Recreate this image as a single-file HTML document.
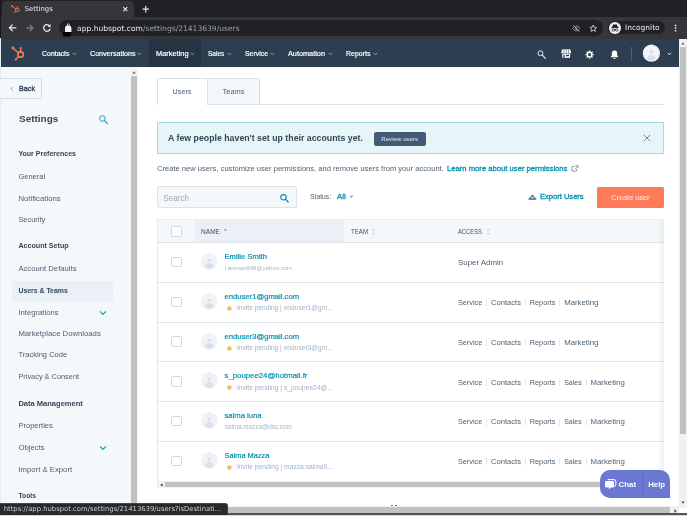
<!DOCTYPE html>
<html lang="en">
<head>
<meta charset="utf-8">
<title>Settings</title>
<style>
*{box-sizing:border-box;margin:0;padding:0}
html,body{width:687px;height:516px;overflow:hidden;background:#fff}
body{position:relative;font-family:"Liberation Sans",sans-serif;font-size:7.5px;color:#33475b}
.abs{position:absolute}
.ui{font-family:"DejaVu Sans","Liberation Sans",sans-serif}
.t{position:absolute;white-space:nowrap;line-height:10px;height:10px}
.row{left:157px;width:507px;height:1px;background:#dfe3eb}
.cb{left:171.4px;width:10.6px;height:10.4px;border:1px solid #d0d9e3;border-radius:1.5px;background:#fff}
.av{left:200.8px;width:16.8px;height:16.8px;border-radius:50%;background:#f0f3f8;overflow:hidden}
.av b{position:absolute;left:6.1px;top:4.2px;width:4.6px;height:4.6px;border-radius:50%;background:#dde3ec}
.av u{position:absolute;left:3.9px;top:9.6px;width:9px;height:9px;border-radius:50% 50% 0 0;background:#dde3ec}
.dot{left:227px;width:4.6px;height:4.6px;border-radius:50%;background:#f5c26b}
</style>
</head>
<body>
<!-- ===== browser chrome ===== -->
<div class="abs" style="left:0;top:0;width:687px;height:17px;background:#202124"></div>
<div class="abs" style="left:1.5px;top:0.5px;width:132.5px;height:17px;background:#35363a;border-radius:4px 4px 0 0"></div>
<div class="abs" style="left:0;top:17px;width:687px;height:21.700px;background:#35363a"></div>
<div class="abs" style="left:59px;top:20px;width:543.5px;height:15.600px;border-radius:8px;background:#202124"></div>
<div class="abs" style="left:607.7px;top:21px;width:57px;height:13.400px;border-radius:7px;background:#202124"></div>
<div class="abs" style="left:0;top:0;width:1px;height:38px;background:#17181a"></div>
<div class="t ui" style="will-change:transform;left:76.75px;top:23.500px;font-size:7.57px;color:#e8eaed">app.hubspot.com<span style="color:#9aa0a6">/settings/21413639/users</span></div>
<!-- favicon -->
<svg class="abs" style="left:10.800px;top:5px" width="9.400" height="8.800" viewBox="0 0 14 15" preserveAspectRatio="none"><g fill="none" stroke="#f2704f" stroke-width="1.500" stroke-linecap="round"><circle cx="9.400" cy="8.600" r="2.700"/><path d="M9.400 5.600V2.400M7.200 6.800L1.800 2.200M7.400 10.600L4.800 13.200"/></g><circle cx="1.700" cy="1.900" r="1.500" fill="#ff7a59"/></svg>
<svg class="abs" style="left:122px;top:6px" width="7" height="7" viewBox="0 0 7 7"><path d="M1.300 1.100l4 4M5.300 1.100l-4 4" stroke="#e8eaed" stroke-width="1.100" fill="none"/></svg>
<svg class="abs" style="left:142px;top:5px" width="8" height="8" viewBox="0 0 8 8"><path d="M3.700 1v6.400M0.500 4.200h6.400" stroke="#e8eaed" stroke-width="1.200" fill="none"/></svg>
<svg class="abs" style="left:8px;top:23px" width="10" height="10" viewBox="0 0 10 10"><path d="M8.300 4.800H1.600M4.600 1.600L1.400 4.800l3.200 3.200" stroke="#e8eaed" stroke-width="1.250" fill="none"/></svg>
<svg class="abs" style="left:25px;top:23px" width="10" height="10" viewBox="0 0 10 10"><path d="M1 4.800h6.700M4.700 1.600l3.200 3.200-3.200 3.200" stroke="#7d8084" stroke-width="1.250" fill="none"/></svg>
<svg class="abs" style="left:42px;top:23px" width="10" height="10" viewBox="0 0 10 10"><path d="M7.600 3A3.300 3.300 0 1 0 8.200 5.600" stroke="#e8eaed" stroke-width="1.250" fill="none"/><path d="M8.600 1v3H5.600z" fill="#e8eaed"/></svg>
<!-- lock + pointer cursor -->
<svg class="abs" style="left:62px;top:22px" width="12" height="16" viewBox="0 0 12 16"><path d="M5.300 3.400V2.900a1.100 1.100 0 0 1 2.200 0v.5" stroke="#e8eaed" stroke-width=".8" fill="none"/><path d="M3 10V6.200c0-1.800 1.200-3 3.100-3 2 0 3.300 1.200 3.300 3.200V10z" fill="#f4f5f6"/><path d="M1 10h8.400v1.800H8.600v2.700H1z" fill="#050505"/></svg>
<!-- eye-off, star -->
<svg class="abs" style="left:571.600px;top:23.600px" width="8.800" height="8.800" viewBox="0 0 10 10"><path d="M.8 5C2 3 3.400 2.300 5 2.300S8 3 9.200 5C8 7 6.600 7.700 5 7.700S2 7 .8 5z" fill="none" stroke="#bdc1c6" stroke-width=".9"/><circle cx="5" cy="5" r="1.300" fill="#bdc1c6"/><path d="M1.600 1.400l6.800 7.200" stroke="#bdc1c6" stroke-width=".9"/><path d="M2.500 .9l6.800 7.200" stroke="#202124" stroke-width=".8"/></svg>
<svg class="abs" style="left:589.200px;top:23.500px" width="8.500" height="8.500" viewBox="0 0 10 10"><path d="M5 1.200l1.150 2.600 2.800.25-2.100 1.850.65 2.750L5 7.200 2.500 8.650l.65-2.750-2.100-1.850 2.800-.25z" fill="none" stroke="#dadce0" stroke-width=".95" stroke-linejoin="round"/></svg>
<!-- incognito avatar -->
<div class="abs" style="left:609px;top:22px;width:11.800px;height:11.800px;border-radius:50%;background:#f1f3f4"></div>
<svg class="abs" style="left:609px;top:22px" width="12" height="12" viewBox="0 0 12 12"><path d="M4.100 2.600h3.800l.9 2.400H3.200z" fill="#202124"/><rect x="2.200" y="5" width="7.600" height=".9" fill="#202124"/><circle cx="4.300" cy="7.900" r="1.250" fill="none" stroke="#202124" stroke-width=".8"/><circle cx="7.700" cy="7.900" r="1.250" fill="none" stroke="#202124" stroke-width=".8"/><path d="M5.400 7.700h1.200" stroke="#202124" stroke-width=".7"/></svg>
<svg class="abs" style="left:673px;top:23px" width="5" height="10" viewBox="0 0 5 10"><circle cx="2.500" cy="2.400" r=".9" fill="#e8eaed"/><circle cx="2.500" cy="5.100" r=".9" fill="#e8eaed"/><circle cx="2.500" cy="7.800" r=".9" fill="#e8eaed"/></svg>

<!-- ===== hubspot nav ===== -->
<div class="abs" style="left:0;top:38.700px;width:679px;height:28.700px;background:#2d3e50"></div>
<div class="abs" style="left:148.600px;top:38.700px;width:52.400px;height:28.700px;background:#253342"></div>
<div class="abs" style="left:0;top:38px;width:1.200px;height:478px;background:#e9ecef"></div>
<svg class="abs" style="left:11px;top:46px" width="15" height="15" viewBox="0 0 15 15"><g fill="none" stroke="#ff7a59" stroke-linecap="round"><circle cx="9.600" cy="8.600" r="2.700" stroke-width="1.600"/><path d="M9.600 5.600V2.200M7.400 6.800L2 2.200M7.600 10.600L5 13.200" stroke-width="1.400"/></g><circle cx="1.900" cy="1.900" r="1.400" fill="#ff7a59"/><circle cx="9.600" cy="2" r="1" fill="#ff7a59"/><circle cx="4.800" cy="13.400" r="1" fill="#ff7a59"/></svg>
<svg class="abs" style="left:72px;top:51.9px" width="5" height="4" viewBox="0 0 5 4"><path d="M.6 .9l1.800 1.800L4.200 .9" stroke="#b4bfcc" stroke-width="0.8" fill="none"/></svg>
<svg class="abs" style="left:136.6px;top:51.9px" width="5" height="4" viewBox="0 0 5 4"><path d="M.6 .9l1.800 1.800L4.200 .9" stroke="#b4bfcc" stroke-width="0.8" fill="none"/></svg>
<svg class="abs" style="left:190.1px;top:51.9px" width="5" height="4" viewBox="0 0 5 4"><path d="M.6 .9l1.800 1.800L4.200 .9" stroke="#b4bfcc" stroke-width="0.8" fill="none"/></svg>
<svg class="abs" style="left:226.6px;top:51.9px" width="5" height="4" viewBox="0 0 5 4"><path d="M.6 .9l1.800 1.800L4.200 .9" stroke="#b4bfcc" stroke-width="0.8" fill="none"/></svg>
<svg class="abs" style="left:270.1px;top:51.9px" width="5" height="4" viewBox="0 0 5 4"><path d="M.6 .9l1.800 1.800L4.200 .9" stroke="#b4bfcc" stroke-width="0.8" fill="none"/></svg>
<svg class="abs" style="left:328px;top:51.9px" width="5" height="4" viewBox="0 0 5 4"><path d="M.6 .9l1.800 1.800L4.200 .9" stroke="#b4bfcc" stroke-width="0.8" fill="none"/></svg>
<svg class="abs" style="left:372.6px;top:51.9px" width="5" height="4" viewBox="0 0 5 4"><path d="M.6 .9l1.800 1.800L4.200 .9" stroke="#b4bfcc" stroke-width="0.8" fill="none"/></svg>
<svg class="abs" style="left:667.4px;top:52.4px" width="5" height="4" viewBox="0 0 5 4"><path d="M.6 .9l1.800 1.800L4.200 .9" stroke="#e5e9ee" stroke-width="1" fill="none"/></svg>

<svg class="abs" style="left:536px;top:48.600px" width="11" height="11" viewBox="0 0 11 11"><circle cx="4.400" cy="4.200" r="2.450" fill="none" stroke="#e9edf2" stroke-width="1"/><path d="M6.300 6.100l3.100 3.300" stroke="#e9edf2" stroke-width="1.150" stroke-linecap="round"/></svg>
<svg class="abs" style="left:561px;top:49.400px" width="10.400" height="9" viewBox="0 0 10.400 9"><path d="M1.300 .2h7.800l1.100 3.100a1.300 1.300 0 0 1-2.500 .3a1.300 1.300 0 0 1-2.500 0a1.300 1.300 0 0 1-2.500 0a1.300 1.300 0 0 1-2.500-.3z" fill="#fff"/><path d="M3.150 .2l-.3 3.300M5.200 .2v3.400M7.250 .2l.3 3.300" stroke="#2d3e50" stroke-width=".55"/><rect x="1.300" y="4.700" width="7.800" height="4.100" fill="#fff"/><rect x="2.400" y="5.800" width="1.300" height="3" fill="#2d3e50"/><rect x="4.900" y="5.800" width="3.200" height="1.400" fill="#2d3e50"/></svg>
<svg class="abs" style="left:585.400px;top:49.600px" width="9.200" height="9.200" viewBox="0 0 10 10"><circle cx="5" cy="5" r="2.500" fill="none" stroke="#fff" stroke-width="1.500"/><g stroke="#fff" stroke-width="1.500"><path d="M5 .5v1.600M5 7.900v1.600M.5 5h1.600M7.900 5h1.600M1.800 1.800l1.150 1.150M7.050 7.050L8.200 8.200M8.200 1.800L7.050 2.950M2.950 7.050L1.800 8.200"/></g></svg>
<svg class="abs" style="left:609.600px;top:49.600px" width="9" height="9.600" viewBox="0 0 10 11"><path d="M5 .6c-2 0-3.100 1.500-3.100 3.400v2.400L.8 7.800v.6h8.400v-.6L8.100 6.400V4C8.100 2.100 7 .6 5 .6z" fill="#fff"/><path d="M3.800 9.200h2.400a1.200 1.200 0 0 1-2.400 0z" fill="#fff"/></svg>
<div class="abs" style="left:631.300px;top:47px;width:1px;height:14px;background:#516f90;opacity:.7"></div>
<svg class="abs" style="left:642px;top:44px" width="19" height="19" viewBox="0 0 19 19"><defs><clipPath id="cn"><circle cx="9.400" cy="9.200" r="8.600"/></clipPath></defs><circle cx="9.400" cy="9.200" r="8.600" fill="#f2f4f8"/><g clip-path="url(#cn)" fill="#dcdfe9"><circle cx="9.200" cy="8" r="1.900"/><ellipse cx="9.200" cy="13.800" rx="3.900" ry="2.800"/></g></svg>

<!-- ===== sidebar ===== -->
<div class="abs" style="left:1.200px;top:67.200px;width:130px;height:440px;background:#f5f8fa"></div>
<div class="abs" style="left:130.300px;top:67.200px;width:8px;height:440px;background:#f3f4f5"></div>
<div class="abs" style="left:131.100px;top:75.900px;width:6.100px;height:431.500px;background:#c1c1c1"></div>
<svg class="abs" style="left:131.300px;top:69.700px" width="6" height="5" viewBox="0 0 6 5"><path d="M3 1.300L4.800 3.600H1.200z" fill="#6a6a6a"/></svg>
<div class="abs" style="left:0;top:78.200px;width:42.400px;height:20.600px;border:1px solid #d3dce6;border-left:0;border-radius:0 2px 2px 0;background:#f5f8fa"></div>
<svg class="abs" style="left:9.500px;top:85.500px" width="4" height="6" viewBox="0 0 4 6"><path d="M3 .7L.9 2.900 3 5.100" stroke="#7c98b6" stroke-width=".8" fill="none"/></svg>
<svg class="abs" style="left:97.500px;top:114px" width="11" height="11" viewBox="0 0 11 11"><circle cx="4.400" cy="4.500" r="2.800" fill="none" stroke="#1aa3b8" stroke-width="1"/><path d="M6.500 6.700l2.800 2.800" stroke="#1aa3b8" stroke-width="1.200" stroke-linecap="round"/></svg>
<div class="abs" style="left:12.200px;top:280.500px;width:100.500px;height:21.200px;background:#eaf0f6;border-radius:2px"></div>
<svg class="abs" style="left:98.500px;top:309.800px" width="8" height="6" viewBox="0 0 8 6"><path d="M1 1.300l3 3 3-3" stroke="#00a4bd" stroke-width="1.200" fill="none"/></svg>
<svg class="abs" style="left:98.500px;top:445.300px" width="8" height="6" viewBox="0 0 8 6"><path d="M1 1.300l3 3 3-3" stroke="#00a4bd" stroke-width="1.200" fill="none"/></svg>

<!-- ===== content ===== -->
<!-- tabs -->
<div class="abs" style="left:157px;top:104px;width:507px;height:1.2px;background:#d9e0e8"></div>
<div class="abs" style="left:207px;top:78px;width:52.800px;height:27.200px;border:1px solid #d9e0e8;border-left:0;border-radius:0 2px 0 0;background:#f5f8fa"></div>
<div class="abs" style="left:157px;top:78px;width:50.800px;height:27px;border:1px solid #d9e0e8;border-bottom:0;border-radius:2px 0 0 0;background:#fff"></div>
<!-- alert -->
<div class="abs" style="left:157px;top:122px;width:506.600px;height:32px;border:1px solid #a6dbe4;background:#e5f5f8"></div>
<div class="abs" style="left:374px;top:132px;width:51.800px;height:13.800px;border-radius:2px;background:#425b76"></div>
<svg class="abs" style="left:642.800px;top:134.200px" width="8" height="8" viewBox="0 0 8 8"><path d="M.8 .8l6.400 6.400M7.200 .8L.8 7.200" stroke="#5f7690" stroke-width=".85" fill="none"/></svg>
<!-- ext link -->
<svg class="abs" style="left:571.100px;top:165px" width="8" height="7" viewBox="0 0 8 7"><path d="M5.600 3.800v2.300H1V1.500h2.400" stroke="#6f87a2" stroke-width=".8" fill="none"/><path d="M4.400 .7h2.700v2.700M7 .8L3.600 4.200" stroke="#6f87a2" stroke-width=".8" fill="none"/></svg>
<!-- search -->
<div class="abs" style="left:157px;top:186px;width:139.600px;height:21.600px;border:1px solid #dbe3eb;border-radius:2px;background:#f5f8fa"></div>
<svg class="abs" style="left:278.500px;top:192.600px" width="11" height="11" viewBox="0 0 11 11"><circle cx="4.500" cy="4.300" r="2.700" fill="none" stroke="#0091ae" stroke-width="1.100"/><path d="M6.600 6.400l2.500 2.600" stroke="#0091ae" stroke-width="1.300" stroke-linecap="round"/></svg>
<svg class="abs" style="left:348.600px;top:194.800px" width="5" height="4" viewBox="0 0 5 4"><path d="M.6 .8h3.800L2.500 3z" fill="#7c98b6"/></svg>
<!-- export icon -->
<svg class="abs" style="left:527.700px;top:193.900px" width="9" height="7" viewBox="0 0 9 7"><path d="M4.400 1.100L7.600 5H1.200z" fill="#dfe5ec" stroke="#6b7f99" stroke-width="1.200" stroke-linejoin="round"/><path d="M.6 5.100h7.600" stroke="#6b7f99" stroke-width="1.500"/></svg>
<div class="abs" style="left:597px;top:186.800px;width:66.500px;height:20.800px;border-radius:1.500px;background:#ff7a59"></div>
<!-- table -->
<div class="abs" style="left:157px;top:218.700px;width:506.600px;height:23.500px;background:#f5f8fa;border-top:1px solid #e9edf2"></div>
<div class="abs" style="left:193.800px;top:219.700px;width:150px;height:22.500px;background:#eaf0f6"></div>
<div class="abs" style="left:157px;top:218.700px;width:1px;height:263px;background:#e4e9ef"></div>
<div class="cb abs" style="top:226.400px"></div>
<svg class="abs" style="left:223px;top:226.5px" width="5" height="10" viewBox="0 0 5 10"><path d="M2.400 1.700L3.700 3.500H1.100z" fill="#14a0b6"/></svg>
<svg class="abs" style="left:371.4px;top:227px" width="5" height="10" viewBox="0 0 5 10"><path d="M2.500 1.600L4.100 3.600H.9z" fill="#cbd6e2"/><path d="M2.500 8L4.100 6H.9z" fill="#cbd6e2"/></svg>
<svg class="abs" style="left:486px;top:227px" width="5" height="10" viewBox="0 0 5 10"><path d="M2.500 1.600L4.100 3.600H.9z" fill="#cbd6e2"/><path d="M2.500 8L4.100 6H.9z" fill="#cbd6e2"/></svg>

<div class="row abs" style="top:242.2px"></div>
<div class="cb abs" style="top:256.9px"></div>
<svg class="abs" style="left:200px;top:252.2px" width="19" height="19" viewBox="0 0 19 19"><defs><clipPath id="c0"><circle cx="9.300" cy="9.500" r="8.400"/></clipPath></defs><circle cx="9.300" cy="9.500" r="8.400" fill="#eff2f7"/><g clip-path="url(#c0)" fill="#d9e0e9"><circle cx="9.300" cy="8.300" r="1.800"/><ellipse cx="9.300" cy="14" rx="3.700" ry="2.700"/></g></svg>
<div class="row abs" style="top:281.95px"></div>
<div class="cb abs" style="top:296.65px"></div>
<svg class="abs" style="left:200px;top:291.95px" width="19" height="19" viewBox="0 0 19 19"><defs><clipPath id="c1"><circle cx="9.300" cy="9.500" r="8.400"/></clipPath></defs><circle cx="9.300" cy="9.500" r="8.400" fill="#eff2f7"/><g clip-path="url(#c1)" fill="#d9e0e9"><circle cx="9.300" cy="8.300" r="1.800"/><ellipse cx="9.300" cy="14" rx="3.700" ry="2.700"/></g></svg>
<svg class="abs" style="left:226px;top:304.85px" width="7" height="7" viewBox="0 0 7 7"><circle cx="3.400" cy="3.500" r="2.350" fill="#f2bf62"/></svg>
<div class="abs" style="left:486.2px;top:299.45px;width:1px;height:7px;background:#e3e8ee"></div>
<div class="abs" style="left:525.0px;top:299.45px;width:1px;height:7px;background:#e3e8ee"></div>
<div class="abs" style="left:559.4px;top:299.45px;width:1px;height:7px;background:#e3e8ee"></div>
<div class="row abs" style="top:321.7px"></div>
<div class="cb abs" style="top:336.4px"></div>
<svg class="abs" style="left:200px;top:331.7px" width="19" height="19" viewBox="0 0 19 19"><defs><clipPath id="c2"><circle cx="9.300" cy="9.500" r="8.400"/></clipPath></defs><circle cx="9.300" cy="9.500" r="8.400" fill="#eff2f7"/><g clip-path="url(#c2)" fill="#d9e0e9"><circle cx="9.300" cy="8.300" r="1.800"/><ellipse cx="9.300" cy="14" rx="3.700" ry="2.700"/></g></svg>
<svg class="abs" style="left:226px;top:344.6px" width="7" height="7" viewBox="0 0 7 7"><circle cx="3.400" cy="3.500" r="2.350" fill="#f2bf62"/></svg>
<div class="abs" style="left:486.2px;top:339.2px;width:1px;height:7px;background:#e3e8ee"></div>
<div class="abs" style="left:525.0px;top:339.2px;width:1px;height:7px;background:#e3e8ee"></div>
<div class="abs" style="left:559.4px;top:339.2px;width:1px;height:7px;background:#e3e8ee"></div>
<div class="row abs" style="top:361.45px"></div>
<div class="cb abs" style="top:376.15px"></div>
<svg class="abs" style="left:200px;top:371.45px" width="19" height="19" viewBox="0 0 19 19"><defs><clipPath id="c3"><circle cx="9.300" cy="9.500" r="8.400"/></clipPath></defs><circle cx="9.300" cy="9.500" r="8.400" fill="#eff2f7"/><g clip-path="url(#c3)" fill="#d9e0e9"><circle cx="9.300" cy="8.300" r="1.800"/><ellipse cx="9.300" cy="14" rx="3.700" ry="2.700"/></g></svg>
<svg class="abs" style="left:226px;top:384.35px" width="7" height="7" viewBox="0 0 7 7"><circle cx="3.400" cy="3.500" r="2.350" fill="#f2bf62"/></svg>
<div class="abs" style="left:486.2px;top:378.95px;width:1px;height:7px;background:#e3e8ee"></div>
<div class="abs" style="left:525.0px;top:378.95px;width:1px;height:7px;background:#e3e8ee"></div>
<div class="abs" style="left:559.4px;top:378.95px;width:1px;height:7px;background:#e3e8ee"></div>
<div class="abs" style="left:585.6999999999999px;top:378.95px;width:1px;height:7px;background:#e3e8ee"></div>
<div class="row abs" style="top:401.2px"></div>
<div class="cb abs" style="top:415.9px"></div>
<svg class="abs" style="left:200px;top:411.2px" width="19" height="19" viewBox="0 0 19 19"><defs><clipPath id="c4"><circle cx="9.300" cy="9.500" r="8.400"/></clipPath></defs><circle cx="9.300" cy="9.500" r="8.400" fill="#eff2f7"/><g clip-path="url(#c4)" fill="#d9e0e9"><circle cx="9.300" cy="8.300" r="1.800"/><ellipse cx="9.300" cy="14" rx="3.700" ry="2.700"/></g></svg>
<div class="abs" style="left:486.2px;top:418.7px;width:1px;height:7px;background:#e3e8ee"></div>
<div class="abs" style="left:525.0px;top:418.7px;width:1px;height:7px;background:#e3e8ee"></div>
<div class="abs" style="left:559.4px;top:418.7px;width:1px;height:7px;background:#e3e8ee"></div>
<div class="abs" style="left:585.6999999999999px;top:418.7px;width:1px;height:7px;background:#e3e8ee"></div>
<div class="row abs" style="top:440.95px"></div>
<div class="cb abs" style="top:455.65px"></div>
<svg class="abs" style="left:200px;top:450.95px" width="19" height="19" viewBox="0 0 19 19"><defs><clipPath id="c5"><circle cx="9.300" cy="9.500" r="8.400"/></clipPath></defs><circle cx="9.300" cy="9.500" r="8.400" fill="#eff2f7"/><g clip-path="url(#c5)" fill="#d9e0e9"><circle cx="9.300" cy="8.300" r="1.800"/><ellipse cx="9.300" cy="14" rx="3.700" ry="2.700"/></g></svg>
<svg class="abs" style="left:226px;top:463.85px" width="7" height="7" viewBox="0 0 7 7"><circle cx="3.400" cy="3.500" r="2.350" fill="#f2bf62"/></svg>
<div class="abs" style="left:486.2px;top:458.45px;width:1px;height:7px;background:#e3e8ee"></div>
<div class="abs" style="left:525.0px;top:458.45px;width:1px;height:7px;background:#e3e8ee"></div>
<div class="abs" style="left:559.4px;top:458.45px;width:1px;height:7px;background:#e3e8ee"></div>
<div class="abs" style="left:585.6999999999999px;top:458.45px;width:1px;height:7px;background:#e3e8ee"></div>

<div class="abs" style="left:656.500px;top:219.700px;width:7px;height:261px;background:linear-gradient(to right,rgba(203,214,226,0),rgba(203,214,226,.35))"></div>
<!-- table h-scrollbar -->
<div class="abs" style="left:157px;top:481px;width:507px;height:7px;background:#f1f1f1"></div>
<div class="abs" style="left:165px;top:482.300px;width:499px;height:4.800px;background:#c1c1c1"></div>
<svg class="abs" style="left:158.500px;top:482px" width="5" height="6" viewBox="0 0 5 6"><path d="M1.200 3L3.600 1.200v3.600z" fill="#505050"/></svg>
<!-- page scrollbars -->
<div class="abs" style="left:679px;top:38.700px;width:8px;height:469px;background:#f1f1f1"></div>
<div class="abs" style="left:680.200px;top:47px;width:6px;height:387px;background:#c1c1c1"></div>
<svg class="abs" style="left:680.200px;top:40.700px" width="6" height="5" viewBox="0 0 6 5"><path d="M3 1.300L4.800 3.600H1.200z" fill="#6a6a6a"/></svg>
<svg class="abs" style="left:680.200px;top:499.700px" width="6" height="5" viewBox="0 0 6 5"><path d="M3 3.700L4.800 1.400H1.200z" fill="#505050"/></svg>
<div class="abs" style="left:1px;top:506.400px;width:678px;height:7px;background:#f1f1f1"></div>
<div class="abs" style="left:8px;top:506.900px;width:662px;height:6.100px;background:#c1c1c1"></div>
<div class="abs" style="left:390.600px;top:505px;width:2px;height:1.200px;background:#5a7485"></div><div class="abs" style="left:395.300px;top:505px;width:2px;height:1.200px;background:#5a7485"></div>
<svg class="abs" style="left:672.500px;top:507.500px" width="5" height="6" viewBox="0 0 5 6"><path d="M3.800 3L1.400 1.200v3.600z" fill="#505050"/></svg>
<div class="abs" style="left:0;top:513.200px;width:687px;height:1.500px;background:#505358"></div>
<div class="abs" style="left:0;top:514.700px;width:687px;height:1.300px;background:#d5d8db"></div>
<!-- chat -->
<div class="abs" style="left:599.700px;top:470px;width:70.800px;height:27.800px;border-radius:10px 10px 0 10px;background:#6a78d1"></div>
<div class="abs" style="left:642px;top:470px;width:1px;height:27.800px;background:#606dc4"></div>
<svg class="abs" style="left:603.500px;top:477.500px" width="13" height="13" viewBox="0 0 13 13"><path d="M3.600 1.600h6.600a1.600 1.600 0 0 1 1.600 1.600v3.600a1.600 1.600 0 0 1-1.600 1.600h-.6" fill="none" stroke="#fff" stroke-width="1"/><path d="M2.400 3h6.200A1.400 1.400 0 0 1 10 4.400v3.800a1.400 1.400 0 0 1-1.400 1.400H6.800L5 11.600V9.600H2.400A1.400 1.400 0 0 1 1 8.200V4.400A1.400 1.400 0 0 1 2.400 3z" fill="#fff"/></svg>
<!-- status bubble -->
<div class="abs" style="left:0;top:502.600px;width:228.300px;height:12px;background:#28292c;border-top:1px solid #45474b;border-right:1px solid #3c4043;border-radius:0 3px 0 0"></div>
<!-- text -->
<div id="txt" style="position:absolute;left:0;top:0;width:687px;height:516px;will-change:transform">
<div class="t ui" style="left:24.75px;top:4.0px;font-size:6.83px;color:#e8eaed">Settings</div>
<div class="t ui" style="left:625px;top:23.4px;font-size:7.48px;color:#e8eaed">Incognito</div>
<div class="t" style="left:41.9px;top:48.6px;font-size:6.6px;color:#ffffff;transform:scaleX(1.0558);transform-origin:0 50%;-webkit-text-stroke:0.18px #ffffff">Contacts</div>
<div class="t" style="left:89.6px;top:48.6px;font-size:6.6px;color:#ffffff;transform:scaleX(1.0785);transform-origin:0 50%;-webkit-text-stroke:0.18px #ffffff">Conversations</div>
<div class="t" style="left:155.7px;top:48.6px;font-size:6.6px;color:#ffffff;transform:scaleX(1.125);transform-origin:0 50%;-webkit-text-stroke:0.18px #ffffff">Marketing</div>
<div class="t" style="left:208.3px;top:48.6px;font-size:6.6px;color:#ffffff;transform:scaleX(0.9873);transform-origin:0 50%;-webkit-text-stroke:0.18px #ffffff">Sales</div>
<div class="t" style="left:245px;top:48.6px;font-size:6.6px;color:#ffffff;transform:scaleX(1.0451);transform-origin:0 50%;-webkit-text-stroke:0.18px #ffffff">Service</div>
<div class="t" style="left:288px;top:48.6px;font-size:6.6px;color:#ffffff;transform:scaleX(1.1082);transform-origin:0 50%;-webkit-text-stroke:0.18px #ffffff">Automation</div>
<div class="t" style="left:345.8px;top:48.6px;font-size:6.6px;color:#ffffff;transform:scaleX(1.0601);transform-origin:0 50%;-webkit-text-stroke:0.18px #ffffff">Reports</div>
<div class="t" style="left:19px;top:83.5px;font-size:7.2px;color:#33475b;-webkit-text-stroke:0.35px #33475b">Back</div>
<div class="t" style="left:18.75px;top:114.1px;font-size:9.2px;color:#33475b;font-weight:bold;transform:scaleX(1.0856);transform-origin:0 50%">Settings</div>
<div class="t" style="left:18.4px;top:148.8px;font-size:7.03px;color:#33475b;font-weight:bold">Your Preferences</div>
<div class="t" style="left:18.4px;top:171.7px;font-size:7.53px;color:#4d5f72">General</div>
<div class="t" style="left:18.4px;top:193.5px;font-size:7.77px;color:#4d5f72">Notifications</div>
<div class="t" style="left:18.4px;top:214.7px;font-size:7.42px;color:#4d5f72">Security</div>
<div class="t" style="left:18.4px;top:241.3px;font-size:7.14px;color:#33475b;font-weight:bold">Account Setup</div>
<div class="t" style="left:18.4px;top:264.1px;font-size:7.69px;color:#4d5f72">Account Defaults</div>
<div class="t" style="left:18.4px;top:286.3px;font-size:6.91px;color:#33475b;font-weight:bold">Users &amp; Teams</div>
<div class="t" style="left:18.4px;top:307.5px;font-size:7.69px;color:#4d5f72">Integrations</div>
<div class="t" style="left:18.4px;top:328.9px;font-size:7.73px;color:#4d5f72">Marketplace Downloads</div>
<div class="t" style="left:18.4px;top:350.3px;font-size:7.55px;color:#4d5f72">Tracking Code</div>
<div class="t" style="left:18.4px;top:371.7px;font-size:7.38px;color:#4d5f72">Privacy &amp; Consent</div>
<div class="t" style="left:18.4px;top:398.8px;font-size:7.54px;color:#33475b;font-weight:bold">Data Management</div>
<div class="t" style="left:18.4px;top:421.4px;font-size:7.57px;color:#4d5f72">Properties</div>
<div class="t" style="left:18.4px;top:443px;font-size:7.76px;color:#4d5f72">Objects</div>
<div class="t" style="left:18.4px;top:464.5px;font-size:7.74px;color:#4d5f72">Import &amp; Export</div>
<div class="t" style="left:18.4px;top:491.2px;font-size:6.79px;color:#33475b;font-weight:bold">Tools</div>
<div class="t" style="left:172.5px;top:87px;font-size:7.28px;color:#4d5f72">Users</div>
<div class="t" style="left:222.5px;top:87px;font-size:7.47px;color:#4d5f72">Teams</div>
<div class="t" style="left:168px;top:133px;font-size:8.3px;color:#33475b;font-weight:bold;transform:scaleX(1.058);transform-origin:0 50%">A few people haven&#x27;t set up their accounts yet.</div>
<div class="t" style="left:381.25px;top:134px;font-size:6.16px;color:#e6ebf0">Review users</div>
<div class="t" style="left:157px;top:163.5px;font-size:7.58px;color:#4d5f72">Create new users, customize user permissions, and remove users from your account.</div>
<div class="t" style="left:447px;top:163.5px;font-size:7.67px;color:#0091ae;-webkit-text-stroke:0.3px #0091ae">Learn more about user permissions</div>
<div class="t" style="left:163.2px;top:193.5px;font-size:8.17px;color:#9aabbf">Search</div>
<div class="t" style="left:310px;top:192px;font-size:6.75px;color:#4d5f72">Status:</div>
<div class="t" style="left:337px;top:192.2px;font-size:7.83px;color:#0091ae;-webkit-text-stroke:0.3px #0091ae">All</div>
<div class="t" style="left:540px;top:192.4px;font-size:7.56px;color:#0091ae;-webkit-text-stroke:0.3px #0091ae">Export Users</div>
<div class="t" style="left:611.2px;top:193px;font-size:7.35px;color:#ffece6">Create user</div>
<div class="t" style="left:201px;top:227.4px;font-size:6.6px;color:#40526a;transform:scaleX(0.9964);transform-origin:0 50%">NAME</div>
<div class="t" style="left:351px;top:227.4px;font-size:6.6px;color:#40526a;transform:scaleX(0.9272);transform-origin:0 50%">TEAM</div>
<div class="t" style="left:458.3px;top:227.4px;font-size:6.6px;color:#40526a;transform:scaleX(0.8806);transform-origin:0 50%">ACCESS</div>
<div class="t" style="left:224.5px;top:251.5px;font-size:7.65px;color:#0091ae;-webkit-text-stroke:0.2px #0091ae">Emilie Smith</div>
<div class="t" style="left:224.8px;top:263.1px;font-size:6.06px;color:#7c98b6;opacity:0.7">l.arenas848@yahoo.com</div>
<div class="t" style="left:458px;top:258.3px;font-size:7.89px;color:#4d5f72">Super Admin</div>
<div class="t" style="left:224.5px;top:291.95px;font-size:7.67px;color:#0091ae;-webkit-text-stroke:0.2px #0091ae">enduser1@gmail.com</div>
<div class="t" style="left:237px;top:303.35px;font-size:6.64px;color:#7c98b6;opacity:0.75">Invite pending | enduser1@gm...</div>
<div class="t" style="left:458px;top:298.05px;font-size:7.26px;color:#4d5f72">Service</div>
<div class="t" style="left:491.0px;top:298.05px;font-size:7.6px;color:#4d5f72">Contacts</div>
<div class="t" style="left:529.8px;top:298.05px;font-size:7.31px;color:#4d5f72">Reports</div>
<div class="t" style="left:564.1999999999999px;top:298.05px;font-size:7.81px;color:#4d5f72">Marketing</div>
<div class="t" style="left:224.5px;top:331.7px;font-size:7.67px;color:#0091ae;-webkit-text-stroke:0.2px #0091ae">enduser3@gmail.com</div>
<div class="t" style="left:237px;top:343.1px;font-size:6.64px;color:#7c98b6;opacity:0.75">Invite pending | enduser3@gm...</div>
<div class="t" style="left:458px;top:337.8px;font-size:7.26px;color:#4d5f72">Service</div>
<div class="t" style="left:491.0px;top:337.8px;font-size:7.6px;color:#4d5f72">Contacts</div>
<div class="t" style="left:529.8px;top:337.8px;font-size:7.31px;color:#4d5f72">Reports</div>
<div class="t" style="left:564.1999999999999px;top:337.8px;font-size:7.81px;color:#4d5f72">Marketing</div>
<div class="t" style="left:224.5px;top:371.45px;font-size:7.81px;color:#0091ae;-webkit-text-stroke:0.2px #0091ae">s_poupee24@hotmail.fr</div>
<div class="t" style="left:237px;top:382.85px;font-size:6.67px;color:#7c98b6;opacity:0.75">Invite pending | s_poupee24@...</div>
<div class="t" style="left:458px;top:377.55px;font-size:7.26px;color:#4d5f72">Service</div>
<div class="t" style="left:491.0px;top:377.55px;font-size:7.6px;color:#4d5f72">Contacts</div>
<div class="t" style="left:529.8px;top:377.55px;font-size:7.31px;color:#4d5f72">Reports</div>
<div class="t" style="left:564.1999999999999px;top:377.55px;font-size:7.0px;color:#4d5f72">Sales</div>
<div class="t" style="left:590.4999999999999px;top:377.55px;font-size:7.81px;color:#4d5f72">Marketing</div>
<div class="t" style="left:224.5px;top:410.5px;font-size:7.65px;color:#0091ae;-webkit-text-stroke:0.2px #0091ae">salma luna</div>
<div class="t" style="left:224.8px;top:422.1px;font-size:6.3px;color:#7c98b6;opacity:0.7">salma.mazza@dsc.com</div>
<div class="t" style="left:458px;top:417.3px;font-size:7.26px;color:#4d5f72">Service</div>
<div class="t" style="left:491.0px;top:417.3px;font-size:7.6px;color:#4d5f72">Contacts</div>
<div class="t" style="left:529.8px;top:417.3px;font-size:7.31px;color:#4d5f72">Reports</div>
<div class="t" style="left:564.1999999999999px;top:417.3px;font-size:7.0px;color:#4d5f72">Sales</div>
<div class="t" style="left:590.4999999999999px;top:417.3px;font-size:7.81px;color:#4d5f72">Marketing</div>
<div class="t" style="left:224.5px;top:450.95px;font-size:7.43px;color:#0091ae;-webkit-text-stroke:0.2px #0091ae">Salma Mazza</div>
<div class="t" style="left:237px;top:462.35px;font-size:6.7px;color:#7c98b6;opacity:0.75">Invite pending | mazza.salma9...</div>
<div class="t" style="left:458px;top:457.05px;font-size:7.26px;color:#4d5f72">Service</div>
<div class="t" style="left:491.0px;top:457.05px;font-size:7.6px;color:#4d5f72">Contacts</div>
<div class="t" style="left:529.8px;top:457.05px;font-size:7.31px;color:#4d5f72">Reports</div>
<div class="t" style="left:564.1999999999999px;top:457.05px;font-size:7.0px;color:#4d5f72">Sales</div>
<div class="t" style="left:590.4999999999999px;top:457.05px;font-size:7.81px;color:#4d5f72">Marketing</div>
<div class="t" style="left:618.6px;top:480px;font-size:7.83px;color:#ffffff;font-weight:bold">Chat</div>
<div class="t" style="left:648.2px;top:480px;font-size:7.84px;color:#ffffff;font-weight:bold">Help</div>
<div class="t ui" style="left:3.7px;top:503.6px;font-size:6.84px;color:#cdd0d4">https://app.hubspot.com/settings/21413639/users?isDestinati...</div>
</div>
</body>
</html>
